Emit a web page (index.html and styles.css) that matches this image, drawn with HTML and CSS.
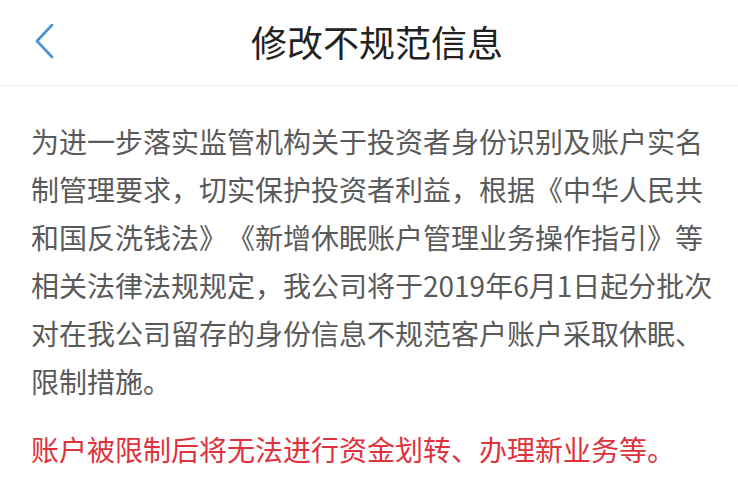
FILE: index.html
```html
<!DOCTYPE html>
<html lang="zh-CN">
<head>
<meta charset="utf-8">
<title>修改不规范信息</title>
<link rel="stylesheet" href="styles.css">
</head>
<body>
<div class="page">
  <header class="nav">
    <span class="back">
      <svg width="20" height="36" viewBox="0 0 20 36"><polyline points="17,1 2,17 17,33" fill="none" stroke="#4a92d8" stroke-width="2.6" stroke-linecap="round" stroke-linejoin="round"/></svg>
    </span>
    <h1 class="title">修改不规范信息</h1>
  </header>
  <main class="content">
    <p class="text">为进一步落实监管机构关于投资者身份识别及账户实名制管理要求，切实保护投资者利益，根据《中华人民共和国反洗钱法》《新增休眠账户管理业务操作指引》等相关法律法规规定，我公司将于2019年6月1日起分批次对在我公司留存的身份信息不规范客户账户采取休眠、限制措施。</p>
    <p class="warn">账户被限制后将无法进行资金划转、办理新业务等。</p>
  </main>
</div>
</body>
</html>
```
FILE: styles.css
```css
html, body {
  margin: 0;
  padding: 0;
  background: #ffffff;
}
body {
  font-family: "Noto Sans CJK SC", "Noto Sans", sans-serif;
  text-spacing-trim: space-all;
}
.page {
  width: 738px;
  height: 502px;
  overflow: hidden;
}
.nav {
  position: relative;
  height: 85px;
  border-bottom: 1px solid #eeeeee;
  display: flex;
  align-items: center;
  justify-content: center;
}
.back {
  position: absolute;
  left: 35px;
  top: 24px;
  width: 20px;
  height: 36px;
  display: block;
}
.back svg {
  display: block;
}
.title {
  margin: 0 0 4px 0;
  font-size: 36px;
  font-weight: 400;
  color: #222222;
  line-height: 1;
  padding-left: 16px;
}
.content {
  padding: 31px 0 0 31px;
  width: 690px;
}
.text, .warn {
  margin: 0;
  font-size: 28px;
  line-height: 48px;
}
.text {
  color: #5a5a5a;
}
.warn {
  margin-top: 20px;
  color: #e0323c;
}
```
